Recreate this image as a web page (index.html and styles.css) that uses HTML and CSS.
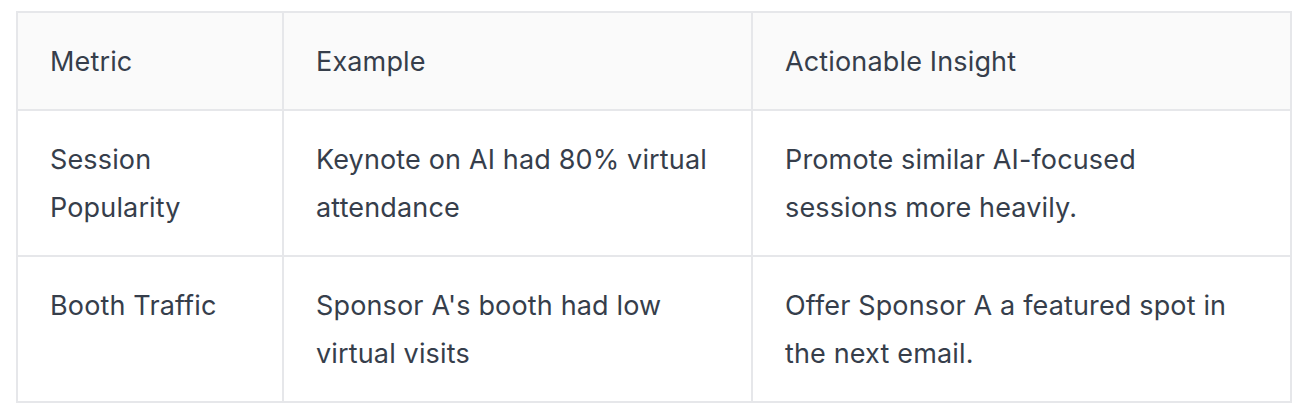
FILE: index.html
```html
<!DOCTYPE html>
<html lang="en">
<head>
<meta charset="utf-8">
<link rel="stylesheet" href="styles.css">
</head>
<body>
<div class="wrap">
<table class="metrics">
  <colgroup>
    <col class="c1">
    <col class="c2">
    <col class="c3">
  </colgroup>
  <thead>
    <tr><th>Metric</th><th>Example</th><th>Actionable Insight</th></tr>
  </thead>
  <tbody>
    <tr><td>Session Popularity</td><td>Keynote on AI had 80% virtual attendance</td><td>Promote similar AI-focused sessions more heavily.</td></tr>
    <tr><td>Booth Traffic</td><td>Sponsor A's booth had low virtual visits</td><td>Offer Sponsor A a featured spot in the next email.</td></tr>
  </tbody>
</table>
</div>
</body>
</html>
```

FILE: styles.css
```css
html, body { margin: 0; padding: 0; background: #fff; }
.wrap { padding: 11px 10px 0 16px; }
.metrics {
  border-collapse: collapse;
  table-layout: fixed;
  width: 1274px;
  font-family: Inter, "Noto Sans", sans-serif;
  font-size: 27px;
  letter-spacing: 0.15px;
  line-height: 48px;
  color: #363e4b;
}
.c1 { width: 266px; }
.c2 { width: 469px; }
.c3 { width: 539px; }
.metrics th, .metrics td {
  border: 2px solid #e6e7ea;
  padding: 25px 36px 23px 32px;
  text-align: left;
  vertical-align: top;
  font-weight: 400;
}
.metrics thead th { background: #fafafa; }
```
